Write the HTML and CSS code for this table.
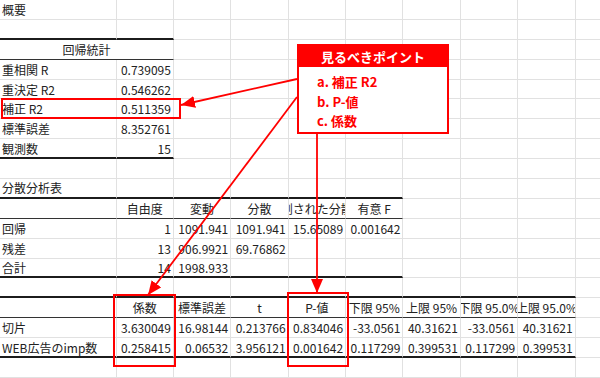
FILE: index.html
```html
<!DOCTYPE html>
<html lang="ja">
<head>
<meta charset="utf-8">
<title>回帰分析 概要</title>
<link rel="stylesheet" href="styles.css">
</head>
<body>
<div class="page">
  <div class="sheet">
    <!-- row 0 -->
    <div class="c">概要</div><div class="c"></div><div class="c"></div><div class="c"></div><div class="c"></div><div class="c"></div><div class="c"></div><div class="c"></div><div class="c"></div><div class="c"></div>
    <!-- row 1 -->
    <div class="c tb"></div><div class="c tb"></div><div class="c"></div><div class="c"></div><div class="c"></div><div class="c"></div><div class="c"></div><div class="c"></div><div class="c"></div><div class="c"></div>
    <!-- row 2 -->
    <div class="c h hb span2">回帰統計</div><div class="c"></div><div class="c"></div><div class="c"></div><div class="c"></div><div class="c"></div><div class="c"></div><div class="c"></div><div class="c"></div>
    <!-- row 3 -->
    <div class="c">重相関 R</div><div class="c n">0.739095</div><div class="c"></div><div class="c"></div><div class="c"></div><div class="c"></div><div class="c"></div><div class="c"></div><div class="c"></div><div class="c"></div>
    <!-- row 4 -->
    <div class="c">重決定 R2</div><div class="c n">0.546262</div><div class="c"></div><div class="c"></div><div class="c"></div><div class="c"></div><div class="c"></div><div class="c"></div><div class="c"></div><div class="c"></div>
    <!-- row 5 -->
    <div class="c">補正 R2</div><div class="c n">0.511359</div><div class="c"></div><div class="c"></div><div class="c"></div><div class="c"></div><div class="c"></div><div class="c"></div><div class="c"></div><div class="c"></div>
    <!-- row 6 -->
    <div class="c">標準誤差</div><div class="c n">8.352761</div><div class="c"></div><div class="c"></div><div class="c"></div><div class="c"></div><div class="c"></div><div class="c"></div><div class="c"></div><div class="c"></div>
    <!-- row 7 -->
    <div class="c tb">観測数</div><div class="c n tb">15</div><div class="c"></div><div class="c"></div><div class="c"></div><div class="c"></div><div class="c"></div><div class="c"></div><div class="c"></div><div class="c"></div>
    <!-- row 8 -->
    <div class="c"></div><div class="c"></div><div class="c"></div><div class="c"></div><div class="c"></div><div class="c"></div><div class="c"></div><div class="c"></div><div class="c"></div><div class="c"></div>
    <!-- row 9 -->
    <div class="c tb">分散分析表</div><div class="c tb"></div><div class="c tb"></div><div class="c tb"></div><div class="c tb"></div><div class="c tb"></div><div class="c"></div><div class="c"></div><div class="c"></div><div class="c"></div>
    <!-- row 10 -->
    <div class="c hb"></div><div class="c h hb">自由度</div><div class="c h hb">変動</div><div class="c h hb">分散</div><div class="c h hb">観測された分散比</div><div class="c h hb">有意 F</div><div class="c"></div><div class="c"></div><div class="c"></div><div class="c"></div>
    <!-- row 11 -->
    <div class="c">回帰</div><div class="c n">1</div><div class="c n">1091.941</div><div class="c n">1091.941</div><div class="c n">15.65089</div><div class="c n">0.001642</div><div class="c"></div><div class="c"></div><div class="c"></div><div class="c"></div>
    <!-- row 12 -->
    <div class="c">残差</div><div class="c n">13</div><div class="c n">906.9921</div><div class="c n">69.76862</div><div class="c"></div><div class="c"></div><div class="c"></div><div class="c"></div><div class="c"></div><div class="c"></div>
    <!-- row 13 -->
    <div class="c tb">合計</div><div class="c n tb">14</div><div class="c n tb">1998.933</div><div class="c tb"></div><div class="c tb"></div><div class="c tb"></div><div class="c"></div><div class="c"></div><div class="c"></div><div class="c"></div>
    <!-- row 14 -->
    <div class="c tb"></div><div class="c tb"></div><div class="c tb"></div><div class="c tb"></div><div class="c tb"></div><div class="c tb"></div><div class="c tb"></div><div class="c tb"></div><div class="c tb"></div><div class="c"></div>
    <!-- row 15 -->
    <div class="c hb"></div><div class="c h hb">係数</div><div class="c h hb">標準誤差</div><div class="c h hb">t</div><div class="c h hb">P-値</div><div class="c h hb">下限 95%</div><div class="c h hb">上限 95%</div><div class="c h hb">下限 95.0%</div><div class="c h hb">上限 95.0%</div><div class="c"></div>
    <!-- row 16 -->
    <div class="c">切片</div><div class="c n">3.630049</div><div class="c n">16.98144</div><div class="c n">0.213766</div><div class="c n">0.834046</div><div class="c n">-33.0561</div><div class="c n">40.31621</div><div class="c n">-33.0561</div><div class="c n">40.31621</div><div class="c"></div>
    <!-- row 17 -->
    <div class="c tb">WEB広告のimp数</div><div class="c n tb">0.258415</div><div class="c n tb">0.06532</div><div class="c n tb">3.956121</div><div class="c n tb">0.001642</div><div class="c n tb">0.117299</div><div class="c n tb">0.399531</div><div class="c n tb">0.117299</div><div class="c n tb">0.399531</div><div class="c"></div>
    <!-- row 18 -->
    <div class="c"></div><div class="c"></div><div class="c"></div><div class="c"></div><div class="c"></div><div class="c"></div><div class="c"></div><div class="c"></div><div class="c"></div><div class="c"></div>
  </div>

  <div class="mark mark-r2"></div>
  <div class="mark mark-coef"></div>
  <div class="mark mark-p"></div>

  <svg class="arrows" width="600" height="378" viewBox="0 0 600 378">
    <defs>
      <marker id="head" markerUnits="userSpaceOnUse" markerWidth="15" markerHeight="12" refX="14" refY="6" orient="auto">
        <path d="M0 0 L14 6 L0 12 Z" fill="#ff0000"/>
      </marker>
    </defs>
    <line x1="297" y1="79" x2="181" y2="105" stroke="#ff0000" stroke-width="1.8" marker-end="url(#head)"/>
    <line x1="297" y1="97" x2="148" y2="295" stroke="#ff0000" stroke-width="1.8" marker-end="url(#head)"/>
    <line x1="317" y1="133" x2="317" y2="293" stroke="#ff0000" stroke-width="1.8" marker-end="url(#head)"/>
  </svg>

  <div class="callout">
    <div class="callout-title">見るべきポイント</div>
    <ul class="callout-list">
      <li>a. 補正 R2</li>
      <li>b. P-値</li>
      <li>c. 係数</li>
    </ul>
  </div>
</div>
</body>
</html>
```

FILE: styles.css
```css
* { box-sizing: border-box; }

html, body {
  margin: 0;
  padding: 0;
  background: #fff;
}

body {
  width: 600px;
  height: 378px;
  overflow: hidden;
  font-family: "Noto Sans CJK JP", "Noto Sans", sans-serif;
  font-size: 12px;
  color: #222;
}

.page {
  position: relative;
  width: 600px;
  height: 378px;
  overflow: hidden;
}

.sheet {
  display: grid;
  grid-template-columns: 116.5px repeat(9, 57.4px);
  grid-auto-rows: 19.9px;
  width: 633px;
}

.c {
  border-right: 1px solid #e1e1e1;
  border-bottom: 1px solid #e1e1e1;
  padding: 1px 2px 0 2px;
  display: flex;
  align-items: center;
  white-space: nowrap;
  overflow: hidden;
  line-height: 1;
}

.n { justify-content: flex-end; }
.h { justify-content: center; padding-left: 0; padding-right: 0; }
.span2 { grid-column: span 2; }

.tb { border-bottom: 2px solid #1c1c1c; }
.hb { border-bottom: 1px solid #333; }

.mark {
  position: absolute;
  border: 2px solid #ff0000;
}
.mark-r2 { left: 1px; top: 98px; width: 180px; height: 21px; }
.mark-coef { left: 113px; top: 294px; width: 63px; height: 73px; }
.mark-p { left: 287px; top: 292px; width: 62px; height: 75px; }

.arrows {
  position: absolute;
  left: 0;
  top: 0;
}

.callout {
  position: absolute;
  left: 297px;
  top: 44px;
  width: 152px;
  height: 90px;
  border: 2px solid #ff0000;
  background: #fff;
}

.callout-title {
  background: #ff0000;
  color: #fff;
  font-weight: bold;
  font-size: 13px;
  height: 21px;
  display: flex;
  align-items: center;
  justify-content: center;
}

.callout-list {
  list-style: none;
  margin: 0;
  padding: 5px 0 0 18px;
  color: #ff0000;
  font-weight: bold;
  font-size: 13px;
}

.callout-list li {
  height: 19.5px;
  line-height: 19.5px;
}
```
